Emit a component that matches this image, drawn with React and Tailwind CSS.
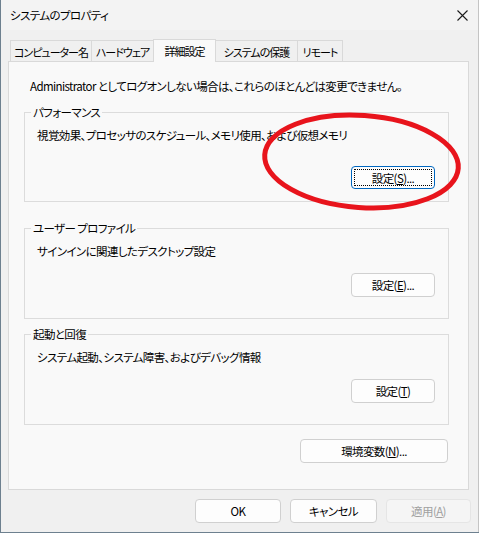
import React from 'react';

const Btn = ({ children, className = '', focused, disabled }) => (
  <button
    className={`flex items-center justify-center whitespace-nowrap rounded-[4px] border leading-[16px] ${
      disabled
        ? 'border-[#e5e5e5] bg-[#f5f5f5] text-[#a0a0a0]'
        : focused
        ? 'border-[#0067c0] bg-[#fdfdfd] text-black [outline:1px_dotted_#000] [outline-offset:-4px]'
        : 'border-[#d0d0d0] bg-[#fdfdfd] text-black'
    } ${className}`}
  >
    {children}
  </button>
);

const Group = ({ title, text, className = '', btnGap, children }) => (
  <div className={`flex w-[425px] flex-col border border-[#dcdcdc] ${className}`}>
    <span className="-mt-[9px] ml-[6px] block w-fit bg-[#f9f9f9] px-[2px] leading-[16px]">{title}</span>
    <p className="mt-[7px] pl-[12px] leading-[16px]">{text}</p>
    <div className={`flex justify-end pr-[13px] ${btnGap}`}>{children}</div>
  </div>
);

const tabs = [
  { label: 'コンピューター名', w: 'w-[82px]' },
  { label: 'ハードウェア', w: 'w-[63px]' },
  { label: '詳細設定', w: 'w-[63px]', active: true },
  { label: 'システムの保護', w: 'w-[83px]' },
  { label: 'リモート', w: 'w-[46px]' },
];

export default function App() {
  return (
    <div className="relative flex h-[533px] w-[479px] items-start bg-[#6d808f] pl-px font-['Noto_Sans_CJK_JP',sans-serif] text-[11.5px] tracking-[-0.6px] text-black [font-feature-settings:'palt']">
      <div className="flex h-[532px] w-[478px] flex-col border-r border-[#c4c4c4] bg-[#f0f0f0]">
        {/* title bar */}
        <div className="flex h-[30px] items-center justify-between bg-[#f3f3f3] pl-[9px] pr-[10px]">
          <span className="leading-[16px]">システムのプロパティ</span>
          <svg width="11" height="11" viewBox="0 0 11 11" className="mt-px">
            <path d="M0.5 0.5 L10.5 10.5 M10.5 0.5 L0.5 10.5" stroke="#1a1a1a" strokeWidth="1.1" />
          </svg>
        </div>

        <div className="flex flex-col pl-[7px] pt-[9px]">
          {/* tabs */}
          <div className="flex items-end pl-[2px] text-[11px] tracking-[-1px]">
            {tabs.map((t, i) => (
              <div
                key={t.label}
                className={`flex items-center justify-center whitespace-nowrap border border-b-0 border-[#d9d9d9] leading-[16px] ${t.w} ${
                  i > 0 ? '-ml-px' : ''
                } ${t.active ? 'relative z-10 -mb-px h-[23px] bg-[#f9f9f9]' : 'h-[21px] bg-[#f0f0f0] pt-px'}`}
              >
                {t.label}
              </div>
            ))}
          </div>

          {/* panel */}
          <div className="flex h-[429px] w-[461px] flex-col border border-[#d9d9d9] bg-[#f9f9f9] pl-[15px] pt-[16px]">
            <p className="ml-[6px] leading-[16px]">
              Administrator としてログオンしない場合は、これらのほとんどは変更できません。
            </p>

            <Group
              title="パフォーマンス"
              text="視覚効果、プロセッサのスケジュール、メモリ使用、および仮想メモリ"
              className="mt-[18px] h-[90px]"
              btnGap="mt-[23px]"
            >
              <Btn focused className="h-[23px] w-[84px]">
                設定(<u>S</u>)...
              </Btn>
            </Group>

            <Group
              title="ユーザー プロファイル"
              text="サインインに関連したデスクトップ設定"
              className="mt-[26px] h-[91px]"
              btnGap="mt-[14px]"
            >
              <Btn className="h-[24px] w-[84px]">
                設定(<u>E</u>)...
              </Btn>
            </Group>

            <Group
              title="起動と回復"
              text="システム起動、システム障害、およびデバッグ情報"
              className="mt-[15px] h-[91px]"
              btnGap="mt-[14px]"
            >
              <Btn className="h-[24px] w-[84px]">
                設定(<u>T</u>)
              </Btn>
            </Group>

            <div className="mt-[14px] flex w-[425px] justify-end pr-px">
              <Btn className="h-[24px] w-[148px]">
                環境変数(<u>N</u>)...
              </Btn>
            </div>
          </div>
        </div>

        {/* dialog buttons */}
        <div className="mt-[9px] flex justify-end gap-[9px] pr-[7px]">
          <Btn className="h-[24px] w-[86px]">OK</Btn>
          <Btn className="h-[24px] w-[87px]">キャンセル</Btn>
          <Btn disabled className="h-[24px] w-[85px]">
            適用(<u>A</u>)
          </Btn>
        </div>
      </div>

      {/* red annotation */}
      <svg className="pointer-events-none absolute left-0 top-0" width="479" height="533">
        <ellipse
          cx="361.5"
          cy="161.5"
          rx="97"
          ry="46"
          transform="rotate(4 361.5 161.5)"
          fill="none"
          stroke="#e8141c"
          strokeWidth="5"
        />
      </svg>
    </div>
  );
}
